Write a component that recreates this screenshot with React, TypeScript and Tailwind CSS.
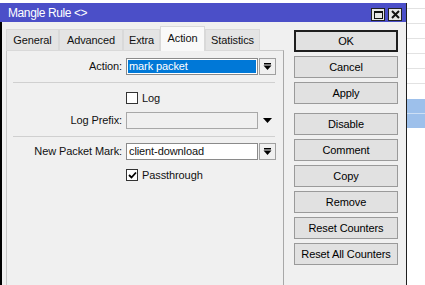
import React from "react";

const tabs = [
  { name: "General", w: "w-[53px]" },
  { name: "Advanced", w: "w-[64px]" },
  { name: "Extra", w: "w-[37px]" },
  { name: "Action", w: "w-[45px]", active: true },
  { name: "Statistics", w: "w-[55px]" },
];

const actions = ["Disable", "Comment", "Copy", "Remove", "Reset Counters", "Reset All Counters"];

function DropIcon() {
  return (
    <svg width="9" height="8" viewBox="0 0 9 8">
      <rect x="1" y="0" width="7" height="1.5" fill="#000" />
      <path d="M0.5 2.5 H8.5 L4.5 7 Z" fill="#000" />
    </svg>
  );
}

function DropBox() {
  return (
    <div className="ml-[1px] w-[17px] h-[17px] border border-[#a0a0a0] bg-[#f0f0f0] flex items-center justify-center">
      <DropIcon />
    </div>
  );
}

function FieldRow({ label, children }: { label: string; children: React.ReactNode }) {
  return (
    <div className="flex items-center h-[17px]">
      <span className="w-[115px] text-right">{label}</span>
      <div className="ml-[4px] flex items-center">{children}</div>
    </div>
  );
}

function Check({ label, checked }: { label: string; checked?: boolean }) {
  return (
    <div className="flex items-center h-[12px] ml-[119px]">
      <div className="w-[12px] h-[12px] border border-[#333] bg-white flex items-center justify-center">
        {checked && (
          <svg width="9" height="8" viewBox="0 0 9 8">
            <path d="M1 4 L3.5 6.5 L8 1.5" stroke="#000" strokeWidth="1.8" fill="none" />
          </svg>
        )}
      </div>
      <span className="ml-[4px]">{label}</span>
    </div>
  );
}

function Btn({ label, primary }: { label: string; primary?: boolean }) {
  return (
    <button
      className={`h-[22px] w-full flex items-center justify-center bg-[#e1e1e1] text-black ${
        primary ? "border-2 border-[#1e1e1e]" : "border border-[#9a9a9a]"
      }`}
    >
      {label}
    </button>
  );
}

export default function App() {
  return (
    <div className="w-[425px] h-[285px] flex bg-white overflow-hidden font-['Liberation_Sans',Arial,sans-serif] text-[11px] tracking-[-0.1px] text-[#111]">
      {/* MANGLE RULE WINDOW */}
      <div className="w-[407px] pt-[3px] flex flex-col">
        <div className="flex-1 flex flex-col border-r border-[#1f1f1f]">
          {/* Title bar */}
          <div className="h-[19px] bg-[#4b4fc8] flex items-center pl-[8px] pr-[4px] shrink-0">
            <span className="text-white text-[12px] tracking-[-0.4px]">Mangle Rule &lt;&gt;</span>
            <div className="ml-auto flex items-center gap-[3px] mt-[4px]">
              <div className="w-[14px] h-[13px] border border-[#222] bg-[#e6e6e6] flex items-center justify-center">
                <div className="w-[9px] h-[8px] border border-[#111] border-t-2"></div>
              </div>
              <div className="w-[14px] h-[13px] border border-[#222] bg-[#e6e6e6] flex items-center justify-center">
                <svg width="9" height="9" viewBox="0 0 9 9">
                  <path d="M1 1 L8 8 M8 1 L1 8" stroke="#111" strokeWidth="2" />
                </svg>
              </div>
            </div>
          </div>

          {/* Body */}
          <div className="flex-1 flex bg-[#f0f0f0] border-l-2 border-black">
            {/* Tabs + panel */}
            <div className="pl-[4px] pt-[4px] flex flex-col">
              <div className="flex items-end h-[25px] -mb-px relative z-10">
                {tabs.map((t) =>
                  t.active ? (
                    <div
                      key={t.name}
                      className={`${t.w} h-[25px] bg-[#f9f9f9] border border-b-0 border-[#d9d9d9] flex items-center justify-center pb-[1px]`}
                    >
                      {t.name}
                    </div>
                  ) : (
                    <div
                      key={t.name}
                      className={`${t.w} h-[22px] bg-[#e4e4e4] border border-[#d9d9d9] flex items-center justify-center`}
                    >
                      {t.name}
                    </div>
                  )
                )}
              </div>
              <div className="w-[278px] flex-1 border border-b-0 border-[#c8c8c8] border-r-[#a8a8a8] pt-[7px]">
                <FieldRow label="Action:">
                  <div className="w-[132px] h-[17px] border border-[#8a8a8a] bg-white p-[1px]">
                    <div className="h-full bg-[#0078d7] text-white flex items-center pl-[1px]">mark packet</div>
                  </div>
                  <DropBox />
                </FieldRow>

                <div className="mt-[7px] ml-[6px] w-[262px] border-t border-[#d0d0d0]"></div>

                <div className="mt-[9px]">
                  <Check label="Log" />
                </div>

                <div className="mt-[8px]">
                  <FieldRow label="Log Prefix:">
                    <div className="w-[132px] h-[17px] border border-[#a8a8a8] bg-[#f0f0f0]"></div>
                    <div className="ml-[1px] w-[17px] flex items-center justify-center">
                      <svg width="9" height="5" viewBox="0 0 9 5">
                        <path d="M0 0 H9 L4.5 5 Z" fill="#000" />
                      </svg>
                    </div>
                  </FieldRow>
                </div>

                <div className="mt-[7px] ml-[6px] w-[262px] border-t border-[#d0d0d0]"></div>

                <div className="mt-[6px]">
                  <FieldRow label="New Packet Mark:">
                    <div className="w-[132px] h-[17px] border border-[#8a8a8a] bg-white flex items-center pl-[2px]">
                      client-download
                    </div>
                    <DropBox />
                  </FieldRow>
                </div>

                <div className="mt-[9px]">
                  <Check label="Passthrough" checked />
                </div>
              </div>
            </div>

            {/* Buttons */}
            <div className="ml-[10px] w-[104px] pt-[8px] flex flex-col gap-[4px]">
              <Btn label="OK" primary />
              <Btn label="Cancel" />
              <Btn label="Apply" />
              <div className="mt-[5px] flex flex-col gap-[4px]">
                {actions.map((a) => (
                  <Btn key={a} label={a} />
                ))}
              </div>
            </div>
          </div>
        </div>
      </div>

      {/* Background list behind the window */}
      <div className="flex-1 flex flex-col">
        <div className="h-[9px] border-b border-[#e2e2e2]"></div>
        <div className="h-[15px] border-b border-[#e2e2e2]"></div>
        <div className="h-[15px] border-b border-[#e2e2e2]"></div>
        <div className="h-[15px] border-b border-[#e2e2e2]"></div>
        <div className="h-[15px] border-b border-[#e2e2e2]"></div>
        <div className="h-[15px] border-b border-[#e2e2e2]"></div>
        <div className="h-[15px]"></div>
        <div className="h-[15px] bg-[#9dc0eb] border-b border-[#cddff5]"></div>
        <div className="h-[14px] bg-[#9dc0eb]"></div>
      </div>
    </div>
  );
}
